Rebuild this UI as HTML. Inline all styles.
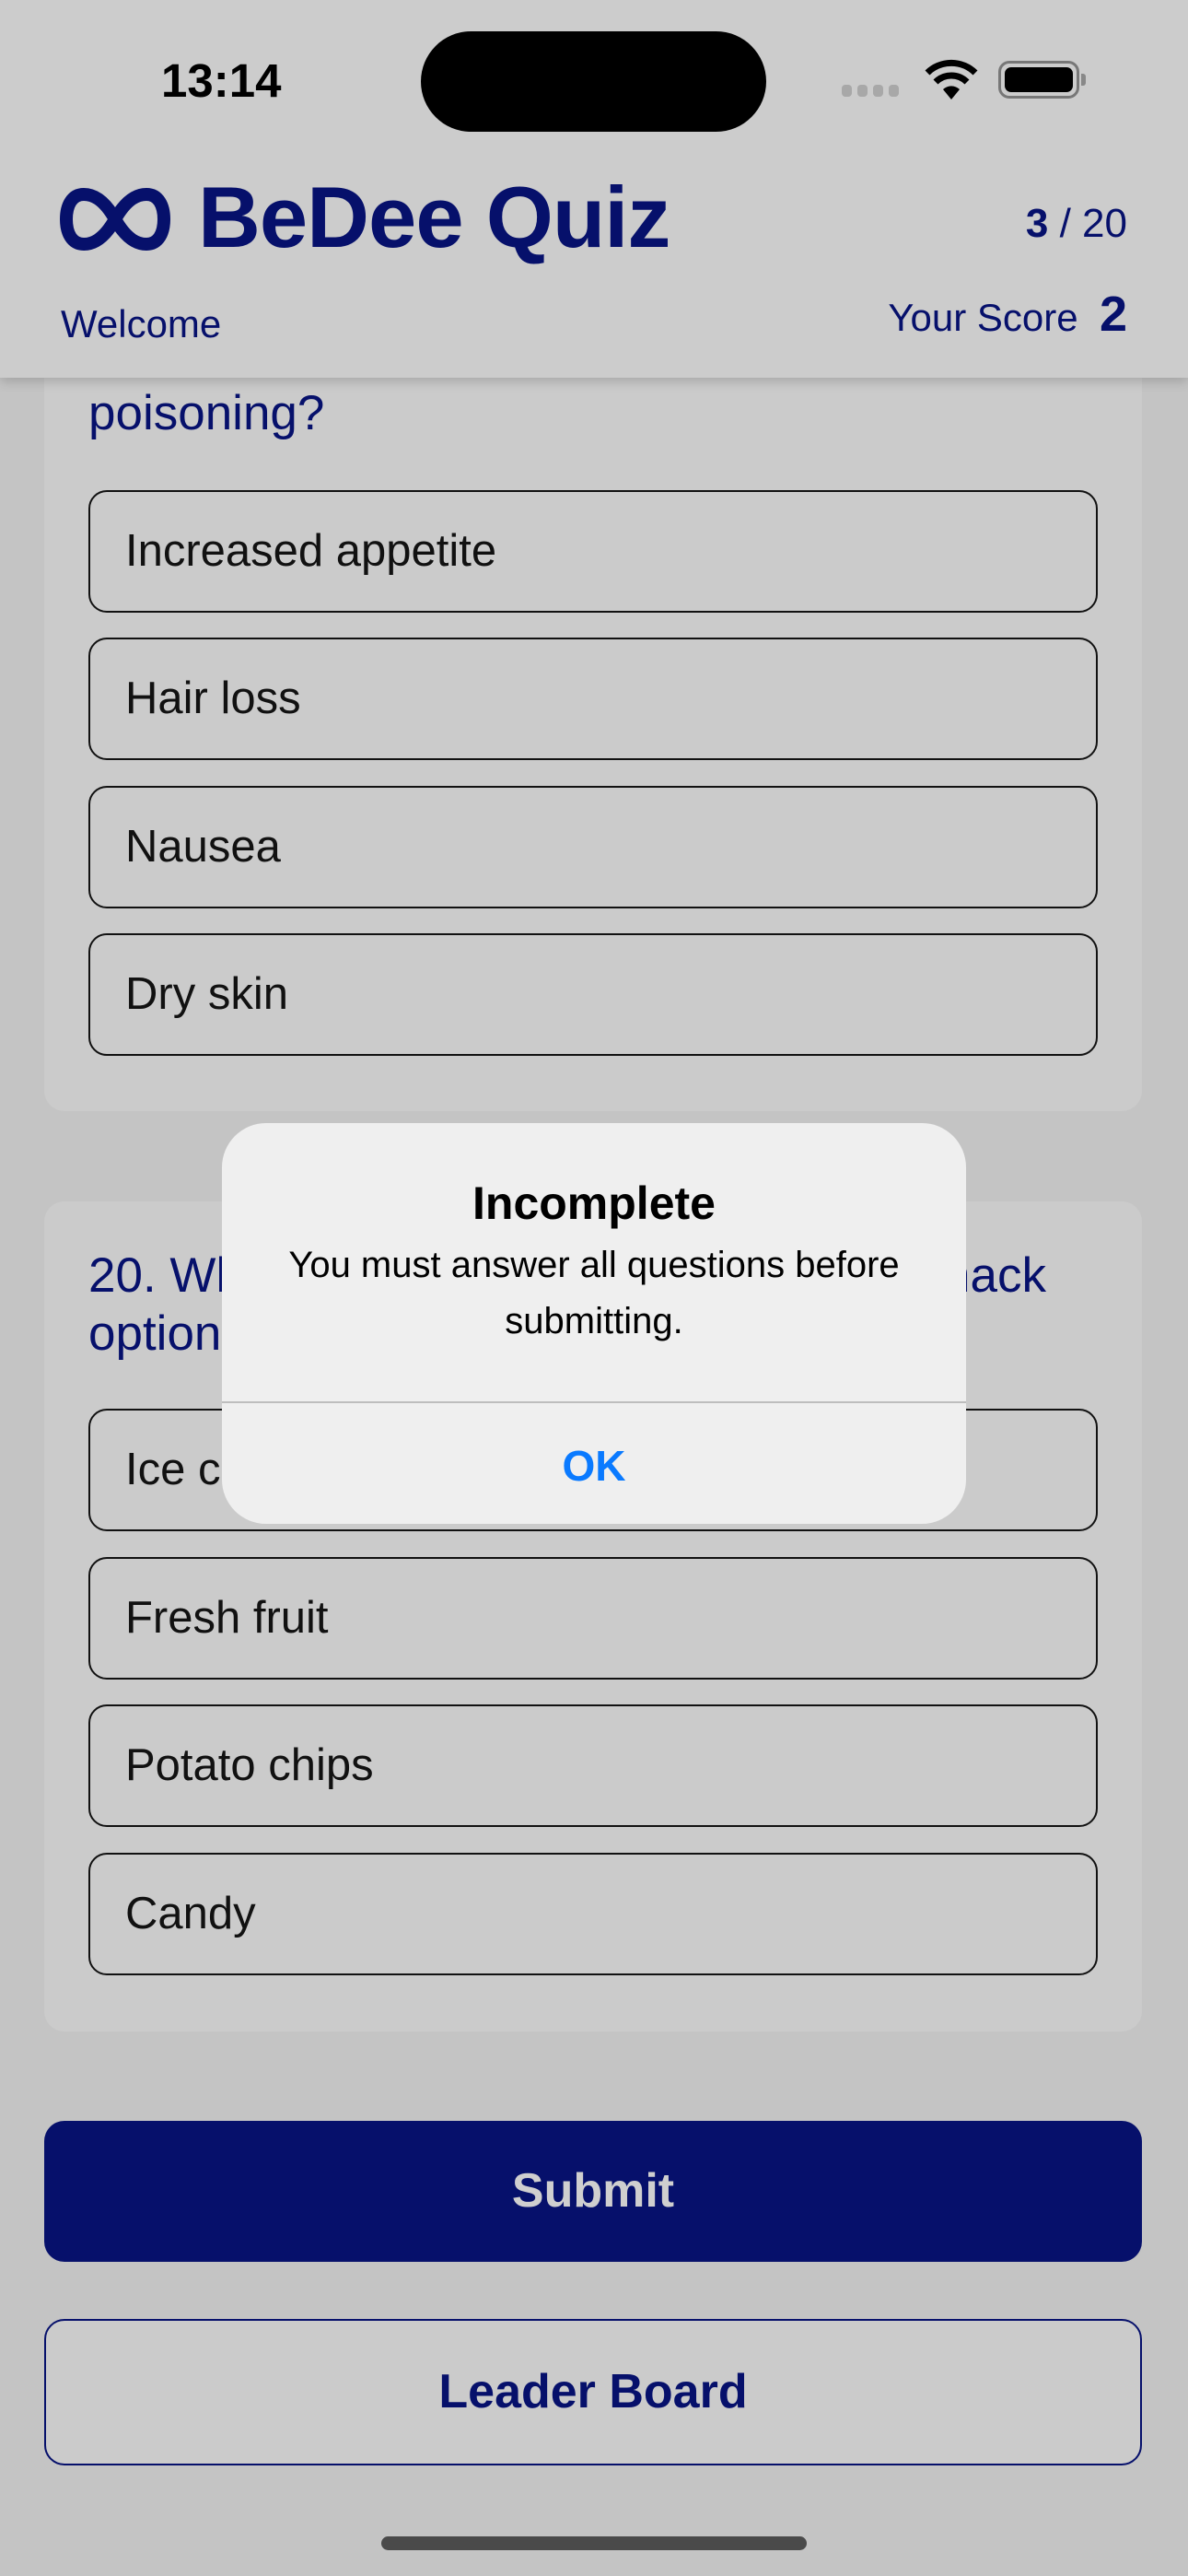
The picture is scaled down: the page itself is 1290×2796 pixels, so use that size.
<!DOCTYPE html>
<html><head><meta charset="utf-8"><style>
*{margin:0;padding:0;box-sizing:border-box}
body{width:1290px;height:2796px;background:#c4c4c4;font-family:"Liberation Sans",sans-serif;position:relative;overflow:hidden}
.abs{position:absolute}
.card{position:absolute;left:48px;width:1192px;background:#cbcbcb;border-radius:22px}
.opt{position:absolute;left:96px;width:1096px;height:133px;border:2.5px solid #111;border-radius:20px;font-size:49px;color:#111;line-height:128px;padding-left:38px}
.q{position:absolute;left:96px;font-size:53px;color:#06106b;white-space:nowrap}
</style></head><body>
<div class="card" style="top:300px;height:906px"></div>
<div class="q" style="top:418px">poisoning?</div>
<div class="opt" style="top:532px">Increased appetite</div>
<div class="opt" style="top:692px">Hair loss</div>
<div class="opt" style="top:853px">Nausea</div>
<div class="opt" style="top:1013px">Dry skin</div>

<div class="card" style="top:1304px;height:901px"></div>
<div class="q" style="top:1353px;line-height:63px">20. Which of the following is a healthy snack<br>option?</div>
<div class="opt" style="top:1529px">Ice cream</div>
<div class="opt" style="top:1690px">Fresh fruit</div>
<div class="opt" style="top:1850px">Potato chips</div>
<div class="opt" style="top:2011px">Candy</div>

<div class="abs" style="left:48px;top:2302px;width:1192px;height:153px;background:#06106b;border-radius:22px;color:#cfcfcf;font-size:52px;font-weight:bold;text-align:center;line-height:153px">Submit</div>
<div class="abs" style="left:48px;top:2517px;width:1192px;height:159px;background:#cbcbcb;border:2.5px solid #06106b;border-radius:22px;color:#06106b;font-size:52px;font-weight:bold;text-align:center;line-height:154px">Leader Board</div>
<div class="abs" style="left:414px;top:2753px;width:462px;height:15px;background:#4a4a4a;border-radius:8px"></div>

<!-- header -->
<div class="abs" style="left:0;top:0;width:1290px;height:410px;background:#cccccc;box-shadow:0 4px 12px rgba(0,0,0,0.18)"></div>
<div class="abs" style="left:175px;top:58px;font-size:51px;font-weight:bold;color:#000">13:14</div>
<div class="abs" style="left:457px;top:34px;width:375px;height:109px;background:#000;border-radius:55px"></div>
<div class="abs" style="left:914px;top:92px;width:66px;height:14px;display:flex;gap:6px">
<div style="width:11px;height:13px;background:#a8a8a8;border-radius:4px"></div><div style="width:11px;height:13px;background:#a8a8a8;border-radius:4px"></div><div style="width:11px;height:13px;background:#a8a8a8;border-radius:4px"></div><div style="width:11px;height:13px;background:#a8a8a8;border-radius:4px"></div></div>
<svg class="abs" style="left:1002px;top:62px" width="62" height="48" viewBox="0 0 62 48"><path d="M31 46 L22 35 A13 13 0 0 1 40 35Z" fill="#000"/><path d="M14 27 A24 24 0 0 1 48 27" stroke="#000" stroke-width="7" fill="none"/><path d="M5 17 A37 37 0 0 1 57 17" stroke="#000" stroke-width="7" fill="none"/></svg>
<div class="abs" style="left:1084px;top:66px;width:88px;height:41px;border:3px solid #777;border-radius:12px;padding:4px"><div style="width:100%;height:100%;background:#000;border-radius:7px"></div></div>
<div class="abs" style="left:1174px;top:80px;width:5px;height:13px;background:#888;border-radius:0 3px 3px 0"></div>

<svg class="abs" style="left:64px;top:203px" width="122" height="70" viewBox="0 0 122 70"><path d="M61 35 C48 12 36 8 27 8 C14 8 8 20 8 35 C8 50 14 62 27 62 C36 62 48 58 61 35 C74 12 86 8 95 8 C108 8 114 20 114 35 C114 50 108 62 95 62 C86 62 74 58 61 35Z" stroke="#06106b" stroke-width="14" fill="none"/></svg>
<div class="abs" style="left:215px;top:182px;font-size:94px;font-weight:bold;color:#06106b;letter-spacing:-1px">BeDee Quiz</div>
<div class="abs" style="right:66px;top:218px;font-size:44px;color:#06106b"><b>3</b> / 20</div>
<div class="abs" style="left:66px;top:328px;font-size:42px;color:#06106b">Welcome</div>
<div class="abs" style="right:66px;top:310px;font-size:42px;color:#06106b;white-space:nowrap">Your Score &nbsp;<b style="font-size:54px">2</b></div>

<!-- alert -->
<div class="abs" style="left:241px;top:1219px;width:808px;height:435px;background:#efefef;border-radius:48px;overflow:hidden">
<div style="position:absolute;top:58px;width:100%;text-align:center;font-size:50px;font-weight:bold;color:#000">Incomplete</div>
<div style="position:absolute;top:124px;width:100%;text-align:center;font-size:40px;line-height:61px;color:#000">You must answer all questions before<br>submitting.</div>
<div style="position:absolute;top:302px;width:100%;height:2px;background:#bdbdbd"></div>
<div style="position:absolute;top:345px;width:100%;text-align:center;font-size:46px;font-weight:bold;color:#0a7aff">OK</div>
</div>
</body></html>
